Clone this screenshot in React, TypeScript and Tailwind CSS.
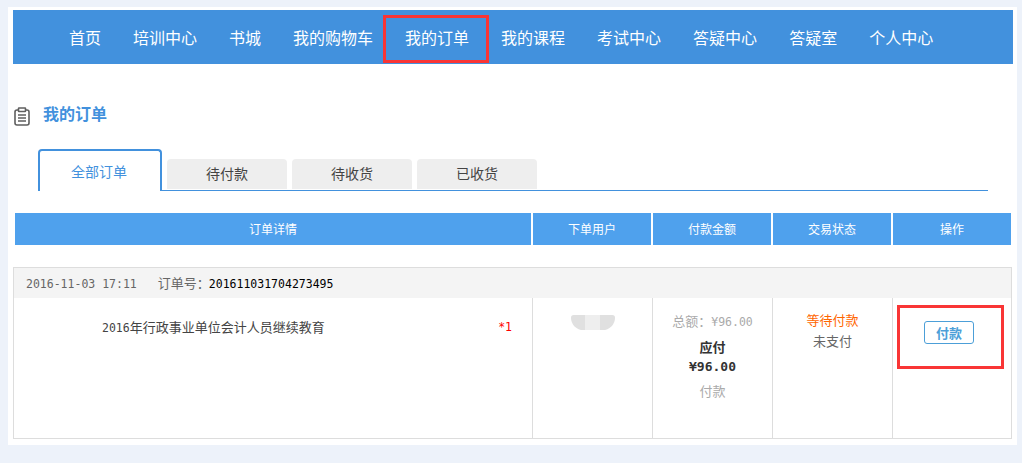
const navItems = ["首页", "培训中心", "书城", "我的购物车", "我的订单", "我的课程", "考试中心", "答疑中心", "答疑室", "个人中心"];
const tabs = ["待付款", "待收货", "已收货"];
const columns = ["下单用户", "付款金额", "交易状态", "操作"];

const cjk = { fontFamily: '"Noto Sans CJK SC", sans-serif' };
const mono = '"DejaVu Sans Mono", "Noto Sans CJK SC", monospace';

const ClipboardIcon = () => (
  <svg width="16" height="19" viewBox="0 0 16 19" fill="none" stroke="#5f5f5f" strokeWidth="1.6">
    <rect x="1" y="3" width="14" height="15" rx="2" />
    <rect x="4.5" y="1" width="7" height="3.5" fill="#fff" rx="0.5" />
    <path d="M4 8h8M4 11h8M4 14h8" />
  </svg>
);

export default function App() {
  return (
    <div className="h-[463px] w-[1022px] overflow-hidden bg-[#edf2fa] pl-2 pt-[7px]" style={cjk}>
      <div className="h-[438px] w-[1009px] bg-white px-[5px] pt-[3px]">
        {/* top nav */}
        <div className="relative flex h-[54px] w-[1000px] items-center bg-[#4291dd] pl-10">
          {navItems.map((item) => (
            <a key={item} className="-mt-px px-4 text-base leading-[54px] whitespace-nowrap text-white">
              {item}
            </a>
          ))}
          <div className="absolute top-[5px] left-[370px] h-[48px] w-[106px] border-[3px] border-[#f93535]" />
        </div>

        <div className="mt-[36px] flex h-[28px] items-center">
          <div className="mt-1 ml-[1px]">
            <ClipboardIcon />
          </div>
          <h2 className="-mt-[2px] ml-[13px] text-base leading-[28px] font-bold text-[#4291dd]">我的订单</h2>
        </div>

        {/* tabs */}
        <div className="mt-[21px] ml-[25px] flex h-[42px] w-[950px] items-end gap-[5px] border-b border-[#4291dd]">
          <div className="-mb-px flex h-[42px] w-[124px] justify-center rounded-t border-2 border-b-0 border-[#4291dd] bg-white pt-[8px] pr-[2px] text-sm leading-[24px] text-[#4291dd]">
            全部订单
          </div>
          {tabs.map((tab) => (
            <div key={tab} className="mb-px flex h-[30px] w-[120px] items-center justify-center rounded-t-sm bg-[#eeeeee] pb-[2px] text-sm text-[#444]">
              {tab}
            </div>
          ))}
        </div>

        {/* table header */}
        <div className="mt-[22px] ml-[2px] flex h-[32px] w-[996px] gap-[2px] text-xs text-white">
          <div className="flex w-[516px] items-center justify-center bg-[#4fa1ed]">订单详情</div>
          {columns.map((col) => (
            <div key={col} className="flex w-[118px] items-center justify-center bg-[#4fa1ed]">
              {col}
            </div>
          ))}
        </div>

        {/* order */}
        <div className="mt-[22px] h-[172px] w-[999px] border border-[#dddddd]">
          <div className="flex h-[30px] items-baseline bg-[#f4f4f4] pl-3 text-[13px] leading-[30px] text-[#666]">
            <span className="text-[11.5px]" style={{ fontFamily: mono }}>2016-11-03 17:11</span>
            <span className="ml-[21px]">订单号：</span>
            <span className="-ml-[1px] text-[11.5px] text-black" style={{ fontFamily: mono }}>201611031704273495</span>
          </div>
          <div className="flex h-[140px]">
            <div className="flex w-[518px] justify-between pt-[21px] pr-5 pl-[88px] text-[13px] leading-[16px] text-[#444]">
              <span>
                <span className="text-[11.5px]" style={{ fontFamily: mono }}>2016</span>年行政事业单位会计人员继续教育
              </span>
              <span className="text-[11.5px] text-[#f00]" style={{ fontFamily: mono }}>*1</span>
            </div>
            <div className="flex w-[120px] justify-center border-l border-[#dddddd] pt-[17px]">
              <div className="flex h-[15px] w-[44px] overflow-hidden rounded-t-[3px] rounded-b-[14px]">
                <div className="w-[14px] bg-[#e0e0e0]" />
                <div className="w-[15px] bg-[#eeeeee]" />
                <div className="w-[15px] bg-[#e0e0e0]" />
              </div>
            </div>
            <div className="flex w-[120px] flex-col items-center border-l border-[#dddddd] pt-[13px] text-[13px] text-[#aaa]">
              <span className="leading-[20px]">
                总额：<span className="text-[11.5px]" style={{ fontFamily: mono }}>¥96.00</span>
              </span>
              <span className="mt-[5px] leading-[20px] font-bold text-[#333]">应付</span>
              <span className="text-[13px] leading-[20px] font-bold text-[#333]" style={{ fontFamily: mono }}>¥96.00</span>
              <span className="mt-[4px] leading-[20px]">付款</span>
            </div>
            <div className="flex w-[120px] flex-col items-center border-l border-[#dddddd] pt-[11px] text-[13px] leading-[21px]">
              <span className="text-[#ff6600]">等待付款</span>
              <span className="text-[#666]">未支付</span>
            </div>
            <div className="relative flex w-[119px] justify-center border-l border-[#dddddd] pt-[23px]">
              <button className="-ml-[6px] flex h-[23px] w-[50px] items-center justify-center rounded-[3px] border border-[#4c9fd8] text-[13px] font-bold text-[#4c9fd8]">
                付款
              </button>
              <div className="absolute top-[7px] left-[4px] h-[64px] w-[107px] border-[3px] border-[#f93535]" />
            </div>
          </div>
        </div>
      </div>
    </div>
  );
}
